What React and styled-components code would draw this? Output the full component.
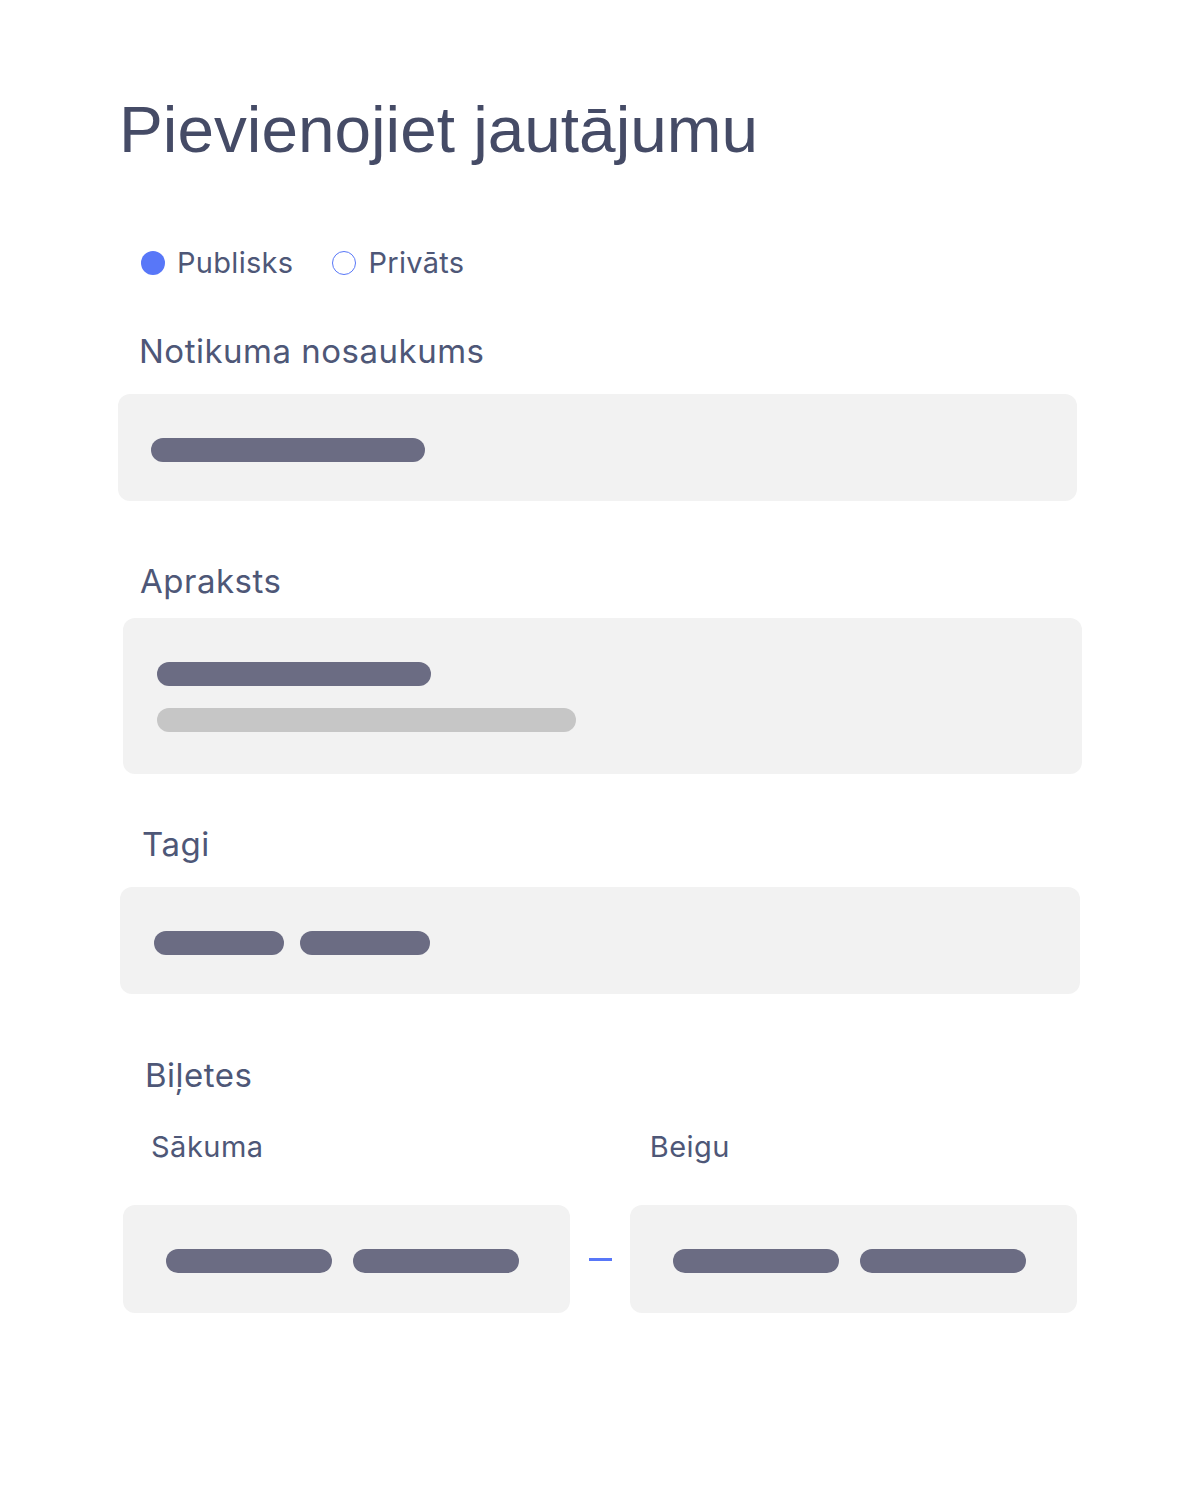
import styled, { createGlobalStyle } from "styled-components"

const GlobalStyle = createGlobalStyle`
    body {
        margin: 0;
        background: #FFFFFF;
        font-family: Inter, "Noto Sans", sans-serif;
    }
`

const StyledPage = styled.div`
    display: flex;
    flex-direction: column;
    width: 1200px;
    min-height: 1500px;
    padding-top: 97px;
    box-sizing: border-box;
`

const StyledTitle = styled.h1`
    margin: 0 0 0 119px;
    font-family: "Liberation Sans", Arial, sans-serif;
    font-weight: normal;
    font-size: 65.7px;
    line-height: 66px;
    color: #454B66;
`

const StyledRadios = styled.div`
    display: flex;
    align-items: center;
    gap: 39px;
    margin: 85px 0 0 141px;
    height: 29px;
`

const StyledOption = styled.div`
    display: flex;
    align-items: center;
    gap: 12px;
    font-size: 29px;
    line-height: 29px;
    letter-spacing: 0.3px;
    color: #4E5777;
`

const StyledDot = styled.span`
    width: 24px;
    height: 24px;
    border-radius: 50%;
    box-sizing: border-box;
    background: ${props => props.$checked ? "#5877F8" : "transparent"};
    border: ${props => props.$checked ? "none" : "1.5px solid #5877F8"};
`

const StyledLabel = styled.div`
    margin: ${props => props.$top}px 0 0 ${props => props.$left}px;
    font-size: ${props => props.$size || 33}px;
    line-height: ${props => props.$size || 33}px;
    letter-spacing: 0.5px;
    color: #4E5777;
`

const StyledField = styled.div`
    display: flex;
    flex-direction: column;
    gap: 22px;
    width: ${props => props.$width}px;
    min-height: ${props => props.$height}px;
    margin: ${props => props.$top || 0}px 0 0 ${props => props.$left || 0}px;
    padding: 44px ${props => props.$pad || 34}px 0;
    box-sizing: border-box;
    background: #F2F2F2;
    border-radius: 12px;
`

const StyledBarRow = styled.div`
    display: flex;
    gap: ${props => props.$gap || 16}px;
`

const StyledBar = styled.div`
    width: ${props => props.$width}px;
    height: 24px;
    border-radius: 12px;
    background: ${props => props.$light ? "#C6C6C6" : "#6B6C83"};
`

const StyledRange = styled.div`
    display: flex;
    align-items: center;
    margin: 44px 0 0 123px;
`

const StyledDash = styled.span`
    width: 23px;
    height: 3px;
    margin: 0 18px 0 19px;
    background: #5877F8;
`

const StyledSubLabels = styled.div`
    display: flex;
    margin: 40px 0 0 151px;
`

function App() {
    return(
        <StyledPage>
            <GlobalStyle />
            <StyledTitle>Pievienojiet jautājumu</StyledTitle>

            <StyledRadios>
                <StyledOption><StyledDot $checked />Publisks</StyledOption>
                <StyledOption><StyledDot />Privāts</StyledOption>
            </StyledRadios>

            <StyledLabel $top={58} $left={139}>Notikuma nosaukums</StyledLabel>
            <StyledField $top={26} $left={118} $width={959} $height={107} $pad={33}>
                <StyledBar $width={274} />
            </StyledField>

            <StyledLabel $top={64} $left={140}>Apraksts</StyledLabel>
            <StyledField $top={20} $left={123} $width={959} $height={156}>
                <StyledBar $width={274} />
                <StyledBar $width={419} $light />
            </StyledField>

            <StyledLabel $top={54} $left={142}>Tagi</StyledLabel>
            <StyledField $top={26} $left={120} $width={960} $height={107}>
                <StyledBarRow>
                    <StyledBar $width={130} />
                    <StyledBar $width={130} />
                </StyledBarRow>
            </StyledField>

            <StyledLabel $top={65} $left={145}>Biļetes</StyledLabel>
            <StyledSubLabels>
                <StyledLabel $top={0} $left={0} $size={29}>Sākuma</StyledLabel>
                <StyledLabel $top={0} $left={386} $size={29}>Beigu</StyledLabel>
            </StyledSubLabels>

            <StyledRange>
                <StyledField $width={447} $height={108} $pad={43}>
                    <StyledBarRow $gap={21}>
                        <StyledBar $width={166} />
                        <StyledBar $width={166} />
                    </StyledBarRow>
                </StyledField>
                <StyledDash />
                <StyledField $width={447} $height={108} $pad={43}>
                    <StyledBarRow $gap={21}>
                        <StyledBar $width={166} />
                        <StyledBar $width={166} />
                    </StyledBarRow>
                </StyledField>
            </StyledRange>
        </StyledPage>
    )
}

export default App
